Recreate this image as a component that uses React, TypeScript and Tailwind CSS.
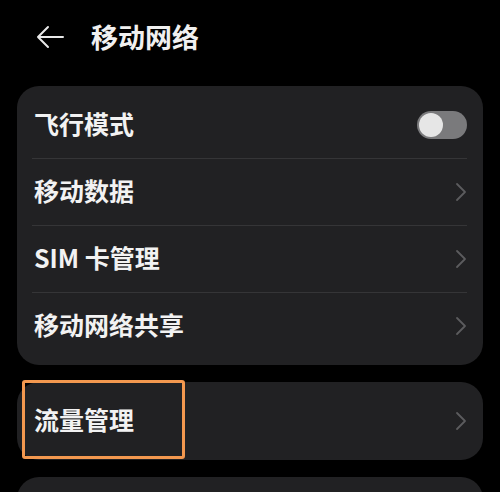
import React from "react";

const font = { fontFamily: '"Noto Sans CJK SC", "Noto Sans", sans-serif' };

function Chevron() {
  return (
    <svg width="12" height="20" viewBox="0 0 12 20" fill="none" className="shrink-0">
      <path d="M2 2l8 8-8 8" stroke="#5c5c5e" strokeWidth="1.8" strokeLinecap="round" strokeLinejoin="round" />
    </svg>
  );
}

function Toggle() {
  return (
    <div className="w-[50px] h-[28px] rounded-full bg-[#7a7a7c] p-[2px] flex items-center">
      <div className="w-[24px] h-[24px] rounded-full bg-[#e6e6e6]" />
    </div>
  );
}

function Row({ label, last, right }: { label: string; last?: boolean; right: React.ReactNode }) {
  return (
    <div className="flex flex-col">
      <div className="h-[66px] flex items-center justify-between pr-[16px]">
        <span className="text-[25px] font-semibold text-[#f2f2f2] leading-none -mt-[3px]">{label}</span>
        {right}
      </div>
      {!last && <div className="h-px bg-[#353537] mr-[16px] -ml-[2px]" />}
    </div>
  );
}

export default function App() {
  return (
    <div className="w-[500px] h-[492px] overflow-hidden bg-black" style={font}>
      <header className="h-[74px] flex items-center pl-[36px] gap-[27px]">
        <svg width="28" height="24" viewBox="0 0 28 24" fill="none">
          <path d="M27 12H2M12 2L2 12l10 10" stroke="#e8e8e8" strokeWidth="2" strokeLinecap="round" strokeLinejoin="round" />
        </svg>
        <h1 className="text-[27px] font-bold text-[#f0f0f0] leading-none -mt-[2px]">移动网络</h1>
      </header>
      <div className="mt-[12px] mx-[17px] rounded-[22px] bg-[#212123] py-[6px] pl-[17px]">
        <Row label="飞行模式" right={<Toggle />} />
        <Row label="移动数据" right={<Chevron />} />
        <Row label="SIM 卡管理" right={<Chevron />} />
        <Row label="移动网络共享" last right={<Chevron />} />
      </div>
      <div className="relative mt-[17px] mx-[17px] h-[78px] rounded-[22px] bg-[#212123] pl-[17px] pr-[16px] flex items-center justify-between">
        <span className="text-[25px] font-semibold text-[#f2f2f2] leading-none -mt-[3px]">流量管理</span>
        <Chevron />
        <div className="absolute left-[5px] -top-[2px] w-[163px] h-[79px] border-[3px] border-[#f3984f] rounded-[3px]" />
      </div>
      <div className="mt-[17px] mx-[17px] h-[78px] rounded-[22px] bg-[#212123]" />
    </div>
  );
}
